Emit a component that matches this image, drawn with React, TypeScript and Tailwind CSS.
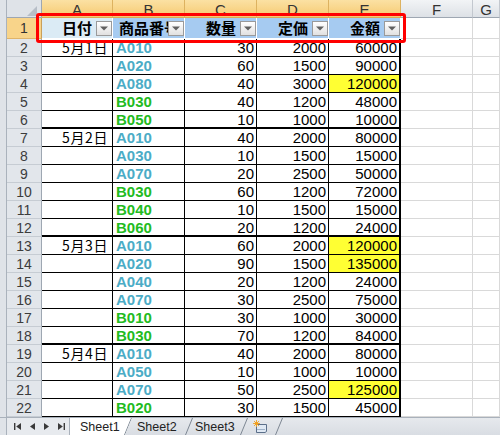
import React from 'react';

type Row = [string, string, number, number, number];

const rows: Row[] = [
  ['5月1日', 'A010', 30, 2000, 60000],
  ['', 'A020', 60, 1500, 90000],
  ['', 'A080', 40, 3000, 120000],
  ['', 'B030', 40, 1200, 48000],
  ['', 'B050', 10, 1000, 10000],
  ['5月2日', 'A010', 40, 2000, 80000],
  ['', 'A030', 10, 1500, 15000],
  ['', 'A070', 20, 2500, 50000],
  ['', 'B030', 60, 1200, 72000],
  ['', 'B040', 10, 1500, 15000],
  ['', 'B060', 20, 1200, 24000],
  ['5月3日', 'A010', 60, 2000, 120000],
  ['', 'A020', 90, 1500, 135000],
  ['', 'A040', 20, 1200, 24000],
  ['', 'A070', 30, 2500, 75000],
  ['', 'B010', 30, 1000, 30000],
  ['', 'B030', 70, 1200, 84000],
  ['5月4日', 'A010', 40, 2000, 80000],
  ['', 'A050', 10, 1000, 10000],
  ['', 'A070', 50, 2500, 125000],
  ['', 'B020', 30, 1500, 45000],
];

const thick = new Set([4, 10, 16]);

function DropBtn() {
  return (
    <div className="absolute right-0 top-[3px] w-[16px] h-[15px] border border-[#9a9a9a] bg-linear-to-b from-[#ffffff] to-[#e1e1e1] flex items-center justify-center">
      <svg width="8" height="5" viewBox="0 0 8 5">
        <path d="M0 0.5H8L4 4.5Z" fill="#606060" />
      </svg>
    </div>
  );
}

function RowHead({ n, sel }: { n: number; sel?: boolean }) {
  return (
    <div
      className={
        sel
          ? 'flex items-center justify-center bg-[#f8d48a] border-r border-b border-r-[#c9a05a] border-b-[#e0b469] text-[14px] leading-[16px] text-[#333333]'
          : 'flex items-center justify-center bg-[#e2e6eb] border-r border-b border-r-[#9ea7b2] border-b-[#c6ccd3] text-[14px] leading-[16px] text-[#3c3c3c]'
      }
    >
      {n}
    </div>
  );
}

export default function App() {
  const colHeads = ['A', 'B', 'C', 'D', 'E', 'F', 'G'];
  return (
    <div className="w-[500px] h-[435px] bg-white flex flex-col overflow-hidden font-['Liberation_Sans','Noto_Sans_CJK_JP',sans-serif]">
      <div className="flex h-[417px]">
        <div className="w-[7px] bg-[#dfe3e8] border-r border-[#aab2bc]" />
        <div className="relative grid grid-cols-[35px_71px_72px_72px_72px_72px_72px_27px] grid-rows-[18px_21px_repeat(21,18px)]">
          {/* corner */}
          <div className="flex items-end justify-end pr-[4px] pb-[1px] bg-[#dfe3e8] border-r border-b border-r-[#9ea7b2] border-b-[#9ea7b2]">
            <svg width="10" height="10" viewBox="0 0 10 10">
              <path d="M10 0V10H0Z" fill="#b7bec7" />
            </svg>
          </div>
          {colHeads.map((c, i) =>
            i < 5 ? (
              <div
                key={c}
                className="flex justify-center items-start pt-[3px] leading-[13px] text-[15px] text-[#333333] bg-linear-to-b from-[#fbe1a3] to-[#f6ca70] border-r border-b border-r-[#ddb260] border-b-[#e0a84e]"
              >
                {c}
              </div>
            ) : (
              <div
                key={c}
                className="flex justify-center items-start pt-[3px] leading-[13px] text-[15px] text-[#333333] bg-linear-to-b from-[#f2f4f6] to-[#dde1e6] border-r border-b border-r-[#c3c8cf] border-b-[#9ea7b2]"
              >
                {c}
              </div>
            )
          )}

          {/* row 1 */}
          <RowHead n={1} sel />
          <div className="relative flex items-center justify-end pr-[20px] bg-[#dbebf5] border-r border-b border-white font-['Noto_Sans_CJK_JP',sans-serif] font-bold text-[15px] leading-[18px] text-black">
            日付
            <DropBtn />
          </div>
          <div className="relative overflow-hidden flex items-center pl-[6px] whitespace-nowrap bg-[#a6cbf1] border-r border-b border-white font-['Noto_Sans_CJK_JP',sans-serif] font-bold text-[15px] leading-[18px] text-black">
            商品番号
            <DropBtn />
          </div>
          <div className="relative flex items-center justify-end pr-[20px] bg-[#a6cbf1] border-r border-b border-white font-['Noto_Sans_CJK_JP',sans-serif] font-bold text-[15px] leading-[18px] text-black">
            数量
            <DropBtn />
          </div>
          <div className="relative flex items-center justify-end pr-[20px] bg-[#a6cbf1] border-r border-b border-white font-['Noto_Sans_CJK_JP',sans-serif] font-bold text-[15px] leading-[18px] text-black">
            定価
            <DropBtn />
          </div>
          <div className="relative flex items-center justify-end pr-[20px] bg-[#a6cbf1] border-r border-b border-white font-['Noto_Sans_CJK_JP',sans-serif] font-bold text-[15px] leading-[18px] text-black">
            金額
            <DropBtn />
          </div>
          <div className="border-r border-b border-[#d9d9d9]" />
          <div className="border-r border-b border-[#d9d9d9]" />

          {rows.map((r, i) => {
            const t = thick.has(i);
            const b = t ? 'border-b-2' : 'border-b';
            const isA = r[1].startsWith('A');
            const yellow = r[4] >= 120000;
            return (
              <React.Fragment key={i}>
                <RowHead n={i + 2} />
                <div
                  className={`flex items-center justify-end pr-[4px] border-r ${b} border-black font-['Noto_Sans_CJK_JP',sans-serif] text-[14px] leading-[17px] tracking-[0.6px] text-black`}
                >
                  {r[0]}
                </div>
                <div
                  className={`flex items-center pl-[3px] border-r ${b} border-black font-bold text-[15px] leading-[17px] ${
                    isA ? 'text-[#4bacc6]' : 'text-[#22bb22]'
                  }`}
                >
                  {r[1]}
                </div>
                <div className={`flex items-center justify-end pr-[2px] border-r ${b} border-black text-[15px] leading-[17px] text-black`}>
                  {r[2]}
                </div>
                <div className={`flex items-center justify-end pr-[2px] border-r ${b} border-black text-[15px] leading-[17px] text-black`}>
                  {r[3]}
                </div>
                <div
                  className={`flex items-center justify-end pr-[2px] border-r-2 ${b} border-black text-[15px] leading-[17px] text-black ${
                    yellow ? 'bg-[#ffff33]' : 'bg-white'
                  }`}
                >
                  {r[4]}
                </div>
                <div className="border-r border-b border-[#d9d9d9]" />
                <div className="border-r border-b border-[#d9d9d9]" />
              </React.Fragment>
            );
          })}

          {/* red highlight frame */}
          <div className="absolute left-[29px] top-[13px] w-[370px] h-[30px] border-[3px] border-[#ff0000] rounded-[3px] pointer-events-none" />
        </div>
      </div>

      {/* sheet tab bar */}
      <div className="flex h-[18px] bg-linear-to-b from-[#e6e9ed] to-[#d9dde3] border-t border-[#a9b1bb] text-[12.5px] leading-[14px] text-[#222222]">
        <div className="w-[7px] bg-[#dfe3e8] border-r border-[#aab2bc]" />
        <div className="w-[63px] flex items-center bg-[#e7eaee] border-r border-[#a9b1bb]">
          <svg className="ml-[7px]" width="7" height="7" viewBox="0 0 7 7">
            <path d="M0 0H1.4V7H0Z M7 0V7L2.2 3.5Z" fill="#3a3a3a" />
          </svg>
          <svg className="ml-[9px]" width="5" height="7" viewBox="0 0 5 7">
            <path d="M5 0V7L0 3.5Z" fill="#3a3a3a" />
          </svg>
          <svg className="ml-[9px]" width="5" height="7" viewBox="0 0 5 7">
            <path d="M0 0V7L5 3.5Z" fill="#3a3a3a" />
          </svg>
          <svg className="ml-[9px]" width="7" height="7" viewBox="0 0 7 7">
            <path d="M0 0V7L4.8 3.5Z M5.6 0H7V7H5.6Z" fill="#3a3a3a" />
          </svg>
        </div>
        <div className="w-[62px] flex items-center pl-[10px] bg-white [clip-path:polygon(0_0,100%_0,calc(100%_-_7px)_100%,0_100%)]">
          <span>Sheet1</span>
          <svg className="ml-auto self-stretch" width="8" height="17" viewBox="0 0 8 17">
            <path d="M0.5 17L7.5 0" stroke="#7d8793" strokeWidth="1" />
          </svg>
        </div>
        <div className="w-[61px] flex items-center pl-[5px]">
          <span>Sheet2</span>
          <svg className="ml-auto self-stretch" width="8" height="17" viewBox="0 0 8 17">
            <path d="M0.5 17L7.5 0" stroke="#7d8793" strokeWidth="1" />
          </svg>
        </div>
        <div className="w-[55px] flex items-center pl-[2px]">
          <span>Sheet3</span>
          <svg className="ml-auto self-stretch" width="8" height="17" viewBox="0 0 8 17">
            <path d="M0.5 17L7.5 0" stroke="#7d8793" strokeWidth="1" />
          </svg>
        </div>
        <div className="w-[35px] flex items-center pl-[5px]">
          <svg width="15" height="13" viewBox="0 0 15 13">
            <path d="M3.5 4.5H13.5V11.5L12 12.5H3.5Z" fill="#dfe8f3" stroke="#5b6f8a" strokeWidth="1" />
            <path d="M4 9.5H12" stroke="#9fb2c8" strokeWidth="1" />
            <circle cx="3.5" cy="3.5" r="1.8" fill="#f6a623" />
            <path d="M3.5 0V7M0 3.5H7M1 1L6 6M6 1L1 6" stroke="#f0a020" strokeWidth="0.9" />
          </svg>
          <svg className="ml-auto self-stretch" width="8" height="17" viewBox="0 0 8 17">
            <path d="M0.5 17L7.5 0" stroke="#7d8793" strokeWidth="1" />
          </svg>
        </div>
        <div className="flex-1" />
      </div>
    </div>
  );
}
